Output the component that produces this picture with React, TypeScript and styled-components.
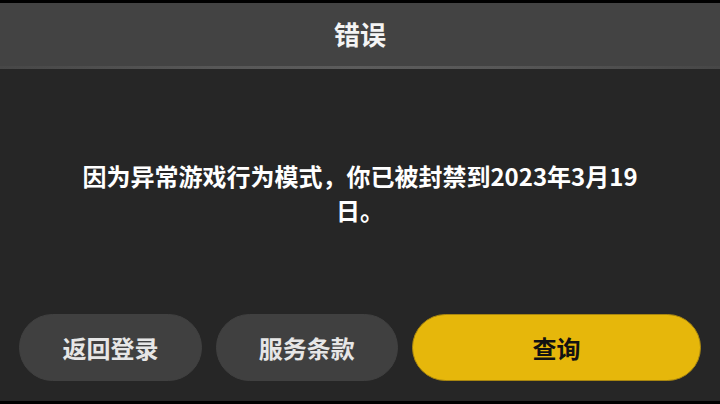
import React from 'react';
import styled, { createGlobalStyle } from 'styled-components';

const GlobalStyle = createGlobalStyle`
  html, body {
    margin: 0;
    padding: 0;
    background: #000;
  }
  body {
    font-family: 'Noto Sans CJK SC', 'Noto Sans', sans-serif;
  }
`;

type ActionTone = 'muted' | 'primary';

interface ActionItem {
  label: string;
  tone: ActionTone;
  grow: number;
}

const actions: ActionItem[] = [
  { label: '返回登录', tone: 'muted', grow: 182 },
  { label: '服务条款', tone: 'muted', grow: 181 },
  { label: '查询', tone: 'primary', grow: 289 },
];

function App() {
  return (
    <>
      <GlobalStyle />
      <Screen>
        <Dialog>
          <Header>
            <Title>错误</Title>
          </Header>
          <Divider />
          <Body>
            <MessageArea>
              <Message>因为异常游戏行为模式，你已被封禁到2023年3月19日。</Message>
            </MessageArea>
            <Footer>
              {actions.map((action) => (
                <ActionButton key={action.label} $tone={action.tone} $grow={action.grow}>
                  {action.label}
                </ActionButton>
              ))}
            </Footer>
          </Body>
        </Dialog>
      </Screen>
    </>
  );
}

export default App;

const Screen = styled.div`
  width: 720px;
  height: 404px;
  padding: 3px 0;
  box-sizing: border-box;
  background: #000;
  overflow: hidden;
`;

const Dialog = styled.div`
  display: flex;
  flex-direction: column;
  height: 100%;
`;

const Header = styled.div`
  height: 63px;
  display: flex;
  align-items: center;
  justify-content: center;
  background: #434343;
`;

const Title = styled.h1`
  margin: 0;
  color: #f4f4f4;
  font-size: 26px;
  font-weight: 700;
  line-height: 1;
  padding-bottom: 1px;
`;

const Divider = styled.div`
  height: 3px;
  background: linear-gradient(
    to right,
    #474747 0%,
    #575757 30%,
    #5c5c5c 50%,
    #575757 70%,
    #474747 100%
  );
`;

const Body = styled.div`
  flex: 1;
  display: flex;
  flex-direction: column;
  background: #262626;
`;

const MessageArea = styled.div`
  flex: 1;
  display: flex;
  align-items: center;
  justify-content: center;
  padding-top: 2px;
`;

const Message = styled.p`
  margin: 0;
  max-width: 560px;
  color: #fff;
  font-size: 24px;
  font-weight: 700;
  line-height: 34px;
  text-align: center;
`;

const Footer = styled.div`
  display: flex;
  gap: 14px;
  padding: 0 19px 20px;
`;

const ActionButton = styled.button<{ $tone: ActionTone; $grow: number }>`
  flex: ${(props) => props.$grow} 1 0;
  height: 67px;
  border-radius: 34px;
  border: 1px solid ${(props) => (props.$tone === 'primary' ? '#a8860f' : '#404040')};
  background: ${(props) => (props.$tone === 'primary' ? '#e6b70b' : '#404040')};
  color: ${(props) => (props.$tone === 'primary' ? '#121212' : '#e6e6e6')};
  font-family: 'Noto Sans CJK SC', 'Noto Sans', sans-serif;
  font-size: 24px;
  font-weight: 700;
  cursor: pointer;
  padding: 0;
`;
